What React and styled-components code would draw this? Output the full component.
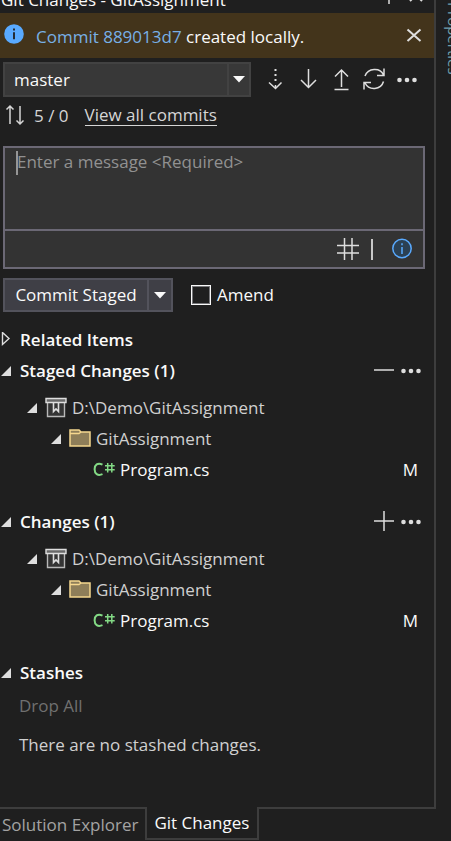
import React from "react";
import styled, { createGlobalStyle } from "styled-components";

const font = '"Open Sans", "Noto Sans", sans-serif';

const GlobalStyle = createGlobalStyle`
  *, *::before, *::after { box-sizing: border-box; }
  body { margin: 0; background: #1f1f1f; color: #fafafa; font: 17px/24px ${font}; }
  button, select, textarea, input { font: inherit; color: inherit; margin: 0; }
  button { border: 0; padding: 0; background: none; cursor: pointer; }
  svg { display: block; flex: none; }
`;

const Window = styled.div`
  display: flex;
  min-height: 100vh;
  overflow: hidden;
`;

const Dock = styled.div`
  flex: 1;
  min-width: 0;
  display: flex;
  flex-direction: column;
`;

const Panel = styled.main`
  flex: 1;
  border-right: 2px solid #3d3d3d;
`;

const TitleBar = styled.header`
  display: flex;
  align-items: flex-end;
  justify-content: space-between;
  height: 13px;
  padding: 0 9px 0 1px;
  overflow: hidden;
  white-space: nowrap;
`;

const Title = styled.h1`
  margin: 0;
  font-size: 17px;
  line-height: 26px;
  font-weight: 400;
`;

const TitleTools = styled.div`
  display: flex;
  gap: 9px;
  padding-bottom: 8px;
`;

const InfoBar = styled.section`
  display: flex;
  align-items: center;
  gap: 12px;
  height: 45px;
  padding: 0 11px 0 4px;
  background: #43341b;
`;

const InfoIcon = styled.span`
  padding-bottom: 3px;
`;

const InfoText = styled.p`
  flex: 1;
  margin: 0;
  padding-top: 3px;
  white-space: nowrap;
`;

const CommitLink = styled.a`
  color: #78b0e6;
  text-decoration: none;
`;

const BranchRow = styled.div`
  display: flex;
  align-items: center;
  gap: 13px;
  padding: 4px 16px 0 3px;
`;

const Combo = styled.div`
  position: relative;
  flex: 1;
`;

const Select = styled.select`
  display: block;
  width: 100%;
  height: 35px;
  padding: 0 30px 0 9px;
  appearance: none;
  border: 2px solid #424242;
  border-radius: 0;
  background: #383838;
`;

const ComboArrow = styled.span`
  position: absolute;
  top: 2px;
  right: 2px;
  bottom: 2px;
  width: 22px;
  display: grid;
  place-items: center;
  border-left: 2px solid #424242;
  pointer-events: none;
`;

const Tools = styled.div`
  display: flex;
  gap: ${(p) => p.$gap}px;
`;

const IconButton = styled.button`
  display: grid;
  place-items: center;
  width: ${(p) => p.$w || 22}px;
  height: 24px;
  color: #dedede;
`;

const SyncRow = styled.div`
  display: flex;
  align-items: center;
  height: 37px;
  padding: 0 5px;
  color: #d6d6d6;
`;

const SyncCount = styled.span`
  padding: 0 16px 0 9px;
`;

const CommitsLink = styled.a`
  color: inherit;
  line-height: 20px;
  text-decoration: none;
  border-bottom: 1px solid currentColor;
`;

const MessageBox = styled.div`
  position: relative;
  margin: 12px 9px 0 3px;
  border: 2px solid #6b6875;
  background: #333333;
`;

const Message = styled.textarea`
  display: block;
  width: 100%;
  height: 81px;
  padding: 2px 12px;
  border: 0;
  outline: 0;
  resize: none;
  background: transparent;
  &::placeholder { color: #919191; opacity: 1; }
`;

const Caret = styled.span`
  position: absolute;
  top: 3px;
  left: 11px;
  width: 2px;
  height: 24px;
  background: #969696;
`;

const MessageTools = styled.div`
  display: flex;
  align-items: center;
  justify-content: flex-end;
  gap: 12px;
  height: 38px;
  padding-right: 10px;
  border-top: 2px solid #6b6875;
`;

const ToolDivider = styled.span`
  width: 2px;
  height: 21px;
  margin-right: 6px;
  background: #c8c8c8;
`;

const CommitRow = styled.div`
  display: flex;
  align-items: center;
  gap: 18px;
  padding: 9px 3px 12px;
`;

const SplitButton = styled.div`
  display: flex;
  height: 34px;
  border: 2px solid #53535c;
  background: #3f3f46;
`;

const CommitButton = styled.button`
  width: 142px;
  white-space: nowrap;
`;

const SplitArrow = styled.button`
  display: grid;
  place-items: center;
  width: 24px;
  border-left: 2px solid #53535c;
`;

const CheckLabel = styled.label`
  display: flex;
  align-items: center;
  gap: 6px;
`;

const Checkbox = styled.input`
  appearance: none;
  width: 20px;
  height: 20px;
  border: 1px solid #fafafa;
  outline: 1px solid #77777a;
  outline-offset: -2px;
  &:checked { background: #78b0e6; }
`;

const Section = styled.section`
  margin-bottom: ${(p) => p.$space || 0}px;
`;

const SectionHeader = styled.div`
  display: flex;
  align-items: center;
  justify-content: space-between;
  height: 31px;
  padding-right: 12px;
`;

const Toggle = styled.button`
  display: flex;
  align-items: center;
  gap: 8px;
  white-space: nowrap;
`;

const Heading = styled.h2`
  margin: 0;
  font-size: 17px;
  line-height: 24px;
  font-weight: 600;
`;

const Tree = styled.ul`
  margin: 0;
  padding: 6px 0 0;
  list-style: none;
`;

const TreeItem = styled.li`
  display: flex;
  align-items: center;
  height: 31px;
  padding: 0 16px 0 ${(p) => p.$indent}px;
  color: ${(p) => (p.$file ? "#fafafa" : "#d0d0d0")};
`;

const TreeToggle = styled.button`
  width: 12px;
  height: 24px;
  margin-right: 7px;
  display: grid;
  place-items: center;
`;

const TreeLabel = styled.span`
  flex: 1;
  padding-left: 5px;
  white-space: nowrap;
`;

const StashBody = styled.div`
  display: flex;
  flex-direction: column;
  align-items: flex-start;
  gap: 15px;
  padding: 6px 19px 24px;
`;

const DropAll = styled.button`
  color: #707070;
`;

const StashText = styled.p`
  margin: 0;
  color: #d0d0d0;
`;

const TabBar = styled.nav`
  display: flex;
  height: 34px;
`;

const Tab = styled.button`
  height: ${(p) => (p.$active ? 33 : 34)}px;
  padding: ${(p) => (p.$active ? "0 8px 0 7px" : "0 7px 0 2px")};
  white-space: nowrap;
  color: ${(p) => (p.$active ? "#fafafa" : "#a3a3a3")};
  border: 0 solid #3d3d3d;
  border-width: ${(p) => (p.$active ? "0 2px 2px" : "2px 0 0")};
`;

const TabFill = styled.span`
  flex: 1;
  height: 2px;
  background: #3d3d3d;
`;

const SideRail = styled.aside`
  width: 15px;
  padding: 2px 0 0 8px;
  overflow: hidden;
`;

const SideTab = styled.button`
  writing-mode: vertical-rl;
  font-size: 15px;
  line-height: 20px;
  color: #6f9fae;
`;

const Down = () => (
  <svg width="12" height="7" viewBox="0 0 12 7"><path d="M0 0h12L6 6.5z" fill="#fafafa" /></svg>
);

const Expander = ({ open }) => (
  <svg width="12" height="16" viewBox="0 0 12 16">
    {open ? <path d="M11 3v10H1z" fill="#dedede" /> : <path d="M2.5 .5v12L9 6.5z" fill="none" stroke="#dedede" strokeWidth="1.4" />}
  </svg>
);

const Line = ({ w = 22, h = 24, d, sw = 1.5, children }) => (
  <svg width={w} height={h} viewBox={`0 0 ${w} ${h}`} fill="none" stroke="currentColor" strokeWidth={sw}>
    <path d={d} />
    {children}
  </svg>
);

const Dots = () => (
  <svg width="22" height="24" viewBox="0 0 22 24" fill="currentColor">
    <circle cx="3.5" cy="12" r="2.3" /><circle cx="11" cy="12" r="2.3" /><circle cx="18.5" cy="12" r="2.3" />
  </svg>
);

const InfoFilled = () => (
  <svg width="20" height="20" viewBox="0 0 20 20">
    <circle cx="10" cy="10" r="9.8" fill="#59aaff" />
    <path d="M10 8.3v7M10 4.5v2" stroke="#1f1f1f" strokeWidth="1.8" />
  </svg>
);

const InfoOutline = () => (
  <svg width="22" height="24" viewBox="0 0 22 24">
    <circle cx="11" cy="11.5" r="9.2" fill="#2b4053" stroke="#59aaff" strokeWidth="1.5" />
    <path d="M11 10v7M11 6.3v2" stroke="#59aaff" strokeWidth="1.5" />
  </svg>
);

const Repo = () => (
  <svg width="22" height="22" viewBox="0 0 22 22" stroke="#dedede" fill="none" strokeWidth="1.4">
    <path d="M2.5 6v13.5h17V6" fill="#343434" stroke="#b8b8b8" />
    <path d="M1 1.5h20v4H1z" fill="#686868" />
    <path d="M8.5 6v8.5l2.5-2.5 2.5 2.5V6" strokeWidth="1.6" />
  </svg>
);

const Folder = () => (
  <svg width="22" height="20" viewBox="0 0 22 20">
    <path d="M1 1h9l2 2h9v14H1z" fill="#8e7e59" stroke="#f5d78e" strokeWidth="1.5" />
    <path d="M1 4.5h9l2-1.5" fill="none" stroke="#f5d78e" strokeWidth="1.3" />
  </svg>
);

const CSharp = () => (
  <svg width="22" height="18" viewBox="0 0 22 18" fill="none" stroke="#83da85">
    <path d="M9.5 3.6C4.5 1.2 1.6 4 1.6 8.3s3 7 7.9 4.9" strokeWidth="2" />
    <path d="M14.7 2v9.5M18.8 2v9.5M12 4.7h9.7M12 8.8h9.7" strokeWidth="1.5" />
  </svg>
);

const Plus = () => <Line d="M1 11h20M11 1v20" />;
const Minus = () => <Line d="M1 11h20" />;

function ChangeGroup({ title, action, icon }) {
  return (
    <Section $space={21}>
      <SectionHeader>
        <Toggle aria-expanded="true"><Expander open /><Heading>{title}</Heading></Toggle>
        <Tools $gap={5}>
          <IconButton aria-label={action}>{icon}</IconButton>
          <IconButton aria-label="More actions"><Dots /></IconButton>
        </Tools>
      </SectionHeader>
      <Tree>
        <TreeItem $indent={26}>
          <TreeToggle aria-label="Collapse repository"><Expander open /></TreeToggle>
          <Repo /><TreeLabel>D:\Demo\GitAssignment</TreeLabel>
        </TreeItem>
        <TreeItem $indent={50}>
          <TreeToggle aria-label="Collapse folder"><Expander open /></TreeToggle>
          <Folder /><TreeLabel>GitAssignment</TreeLabel>
        </TreeItem>
        <TreeItem $indent={93} $file>
          <CSharp /><TreeLabel>Program.cs</TreeLabel><span>M</span>
        </TreeItem>
      </Tree>
    </Section>
  );
}

export default function App() {
  return (
    <Window>
      <GlobalStyle />
      <Dock>
        <Panel>
          <TitleBar>
            <Title>Git Changes - GitAssignment</Title>
            <TitleTools>
              <IconButton $w={18} aria-label="Pin"><Line w={18} d="M9 12v11M3 12h12" /></IconButton>
              <IconButton $w={18} aria-label="Close panel"><Line w={18} d="M3 8l12 12M15 8L3 20" sw={2} /></IconButton>
            </TitleTools>
          </TitleBar>
          <InfoBar>
            <InfoIcon><InfoFilled /></InfoIcon>
            <InfoText><CommitLink href="#commit">Commit 889013d7</CommitLink> created locally.</InfoText>
            <IconButton $w={18} aria-label="Dismiss"><Line w={18} d="M2.5 5.5l13 11.5M15.5 5.5l-13 11.5" sw={2} /></IconButton>
          </InfoBar>
          <BranchRow>
            <Combo>
              <Select aria-label="Branch" defaultValue="master"><option>master</option></Select>
              <ComboArrow><Down /></ComboArrow>
            </Combo>
            <Tools $gap={11}>
              <IconButton aria-label="Fetch">
                <Line d="M5 14.5l6.5 6 6-6M11.5 17v3"><path d="M11.5 1v15" strokeWidth="2" strokeDasharray="2 3" /></Line>
              </IconButton>
              <IconButton aria-label="Pull"><Line d="M11.5 1v18.5M4 12l7.5 7.5L19 12" /></IconButton>
              <IconButton aria-label="Push"><Line d="M11.5 19V2M5 8.5L11.5 2 18 8.5M4.5 21.5h14" /></IconButton>
              <IconButton aria-label="Sync">
                <Line d="M2 8C5 0 17-1 20.5 7M21 .5V7.5h-7M20.5 13.5C18 22 6 23 2 15M1 21.5V14.5h7" />
              </IconButton>
              <IconButton aria-label="More"><Dots /></IconButton>
            </Tools>
          </BranchRow>
          <SyncRow>
            <Line w={20} d="M5 20V2M1.5 5.5L5 2l3.5 3.5M15 2v18M11.5 16.5L15 20l3.5-3.5" />
            <SyncCount>5 / 0</SyncCount>
            <CommitsLink href="#commits">View all commits</CommitsLink>
          </SyncRow>
          <MessageBox>
            <Message aria-label="Commit message" placeholder="Enter a message <Required>" />
            <Caret />
            <MessageTools>
              <IconButton aria-label="Insert reference"><Line d="M7.5 1v22M15 1v22M0 8.5h22M0 16h22" /></IconButton>
              <ToolDivider />
              <IconButton aria-label="Message help"><InfoOutline /></IconButton>
            </MessageTools>
          </MessageBox>
          <CommitRow>
            <SplitButton>
              <CommitButton>Commit Staged</CommitButton>
              <SplitArrow aria-label="Commit options"><Down /></SplitArrow>
            </SplitButton>
            <CheckLabel><Checkbox type="checkbox" />Amend</CheckLabel>
          </CommitRow>
          <Section>
            <SectionHeader>
              <Toggle aria-expanded="false"><Expander /><Heading>Related Items</Heading></Toggle>
            </SectionHeader>
          </Section>
          <ChangeGroup title="Staged Changes (1)" action="Unstage all" icon={<Minus />} />
          <ChangeGroup title="Changes (1)" action="Stage all" icon={<Plus />} />
          <Section>
            <SectionHeader>
              <Toggle aria-expanded="true"><Expander open /><Heading>Stashes</Heading></Toggle>
            </SectionHeader>
            <StashBody>
              <DropAll disabled>Drop All</DropAll>
              <StashText>There are no stashed changes.</StashText>
            </StashBody>
          </Section>
        </Panel>
        <TabBar>
          <Tab>Solution Explorer</Tab>
          <Tab $active>Git Changes</Tab>
          <TabFill />
        </TabBar>
      </Dock>
      <SideRail><SideTab>Properties</SideTab></SideRail>
    </Window>
  );
}
